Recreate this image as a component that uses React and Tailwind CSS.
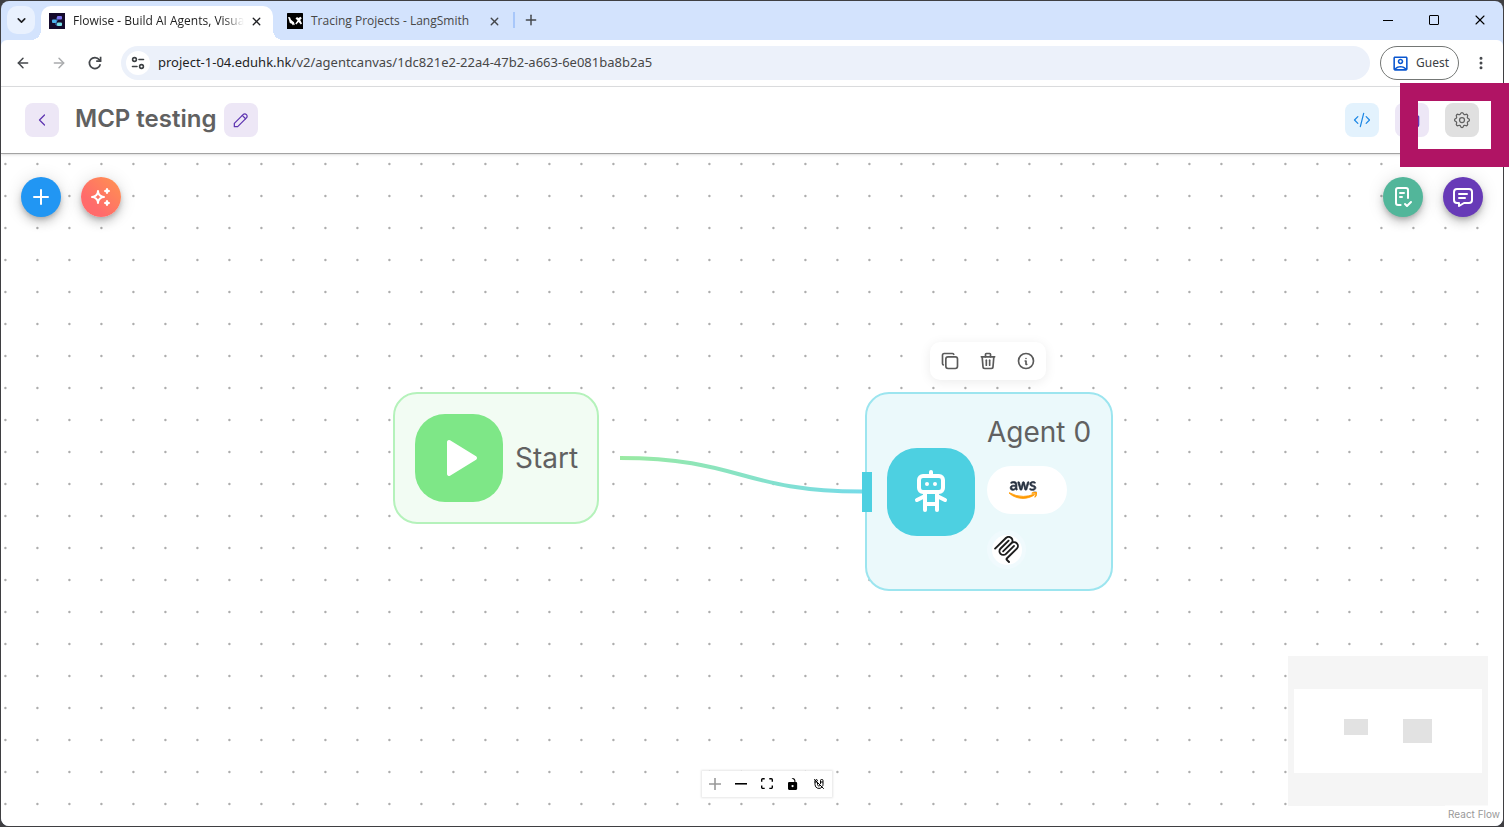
import React from 'react';
import {
  TbChevronLeft, TbPencil, TbCode, TbDeviceFloppy, TbSettings, TbCopy, TbTrash, TbInfoCircle,
  TbPlus, TbRobot, TbPlayerPlayFilled, TbMessage, TbMagnetOff,
} from 'react-icons/tb';
import { FaAws } from 'react-icons/fa6';
import { MdOutlineAccountBox } from 'react-icons/md';
import { ArrowLeft, ArrowRight, ChevronDown, X, Plus, MoreVertical } from 'lucide-react';

function FlowiseIcon() {
  return (
    <svg viewBox="0 0 16 16" className="size-4 shrink-0" aria-hidden="true">
      <rect width="16" height="16" fill="#140a2c" />
      <path d="M5 8h3V4.500h2M7 8v4h2" fill="none" stroke="#3c7fd0" strokeWidth="1" />
      <rect x="3" y="6.500" width="4.500" height="3.500" rx="1" fill="#4db4ee" />
      <rect x="8" y="3" width="5" height="3.500" rx="1" fill="#7b74ee" />
      <rect x="8" y="9.500" width="5" height="3.500" rx="1" fill="#7be0e6" />
    </svg>
  );
}

function LangSmithIcon() {
  return (
    <svg viewBox="0 0 16 16" className="size-4 shrink-0" aria-hidden="true">
      <rect width="16" height="16" rx="0.500" fill="#000" />
      <path d="M1 4l2 .3 1 2.500 3 2.500.8 3-1.300-.7-.5 1-1.200-1.800-2-.8-.8-3z" fill="#fff" />
      <path d="M8.500 5.500l1.500-1.500 1.300 1 2.200-1.300 1.300 1.600-1.600 1.700 1.800 3.600-1.200 1-2.200-2.600-2.300 2.500-1-1 2.300-3z" fill="#fff" />
    </svg>
  );
}

function SiteControlsIcon() {
  return (
    <svg viewBox="0 0 16 16" className="size-4" fill="none" stroke="#3c4043" strokeWidth="1.600" strokeLinecap="round" aria-hidden="true">
      <circle cx="4.500" cy="4.500" r="1.900" />
      <path d="M9 4.500h4.500M2.500 11.500H7" />
      <circle cx="11.500" cy="11.500" r="1.900" />
    </svg>
  );
}

function ReloadIcon() {
  return (
    <svg viewBox="0 0 16 16" className="size-4" fill="none" stroke="#44474b" strokeWidth="1.700" aria-hidden="true">
      <path d="M13.300 9.200A5.500 5.500 0 1 1 12.300 4.700L13.700 6.100" />
      <path d="M13.600 1.800V6.200H9.200" />
    </svg>
  );
}

function SparkleIcon() {
  return (
    <svg viewBox="0 0 24 24" className="size-6" fill="none" stroke="#fff" strokeWidth="2" strokeLinejoin="round" aria-hidden="true">
      <path d="M16 18a2 2 0 0 1 2 2a2 2 0 0 1 2 -2a2 2 0 0 1 -2 -2a2 2 0 0 1 -2 2zM16 6a2 2 0 0 1 2 2a2 2 0 0 1 2 -2a2 2 0 0 1 -2 -2a2 2 0 0 1 -2 2zM9 18a6 6 0 0 1 6 -6a6 6 0 0 1 -6 -6a6 6 0 0 1 -6 6a6 6 0 0 1 6 6z" />
    </svg>
  );
}

function ChecklistIcon() {
  return (
    <svg viewBox="0 0 24 24" className="size-6" fill="none" stroke="#fff" strokeWidth="2" strokeLinecap="round" strokeLinejoin="round" aria-hidden="true">
      <path d="M9.615 20H7a2 2 0 0 1-2-2V5a2 2 0 0 1 2-2h8a2 2 0 0 1 2 2v8" />
      <path d="M14 19l2 2 4-4M9 8h4M9 12h2" />
    </svg>
  );
}

function McpIcon() {
  return (
    <svg viewBox="0 0 24 24" className="size-[27px] shrink-0" fill="#1d1d1d" fillRule="evenodd" aria-hidden="true">
      <path d="M15.688 2.343a2.588 2.588 0 00-3.610 0l-9.626 9.440a.863.863 0 01-1.203 0 .823.823 0 010-1.180l9.626-9.440a4.313 4.313 0 016.016 0 4.116 4.116 0 011.204 3.540 4.300 4.300 0 013.609 1.180l.05.05a4.115 4.115 0 010 5.900l-8.706 8.537a.274.274 0 000 .393l1.788 1.754a.823.823 0 010 1.180.863.863 0 01-1.203 0l-1.788-1.753a1.920 1.920 0 010-2.754l8.706-8.538a2.470 2.470 0 000-3.540l-.05-.049a2.588 2.588 0 00-3.607-.003l-7.172 7.034-.002.002-.098.097a.863.863 0 01-1.204 0 .823.823 0 010-1.180l7.273-7.133a2.470 2.470 0 00-.003-3.537z" />
      <path d="M14.485 4.703a.823.823 0 000-1.180.863.863 0 00-1.204 0l-7.119 6.982a4.115 4.115 0 000 5.900 4.314 4.314 0 006.016 0l7.120-6.982a.823.823 0 000-1.180.863.863 0 00-1.204 0l-7.119 6.982a2.588 2.588 0 01-3.610 0 2.470 2.470 0 010-3.540l7.120-6.982z" />
    </svg>
  );
}

function AwsIcon() {
  return (
    <>
      <svg className="absolute size-0" aria-hidden="true">
        <linearGradient id="awsFill" x1="0" y1="0" x2="0" y2="1">
          <stop offset="0.600" stopColor="#252f3e" />
          <stop offset="0.600" stopColor="#ff9900" />
        </linearGradient>
      </svg>
      <FaAws className="size-7" fill="url(#awsFill)" stroke="url(#awsFill)" strokeWidth="18" aria-label="AWS" />
    </>
  );
}

function TabBar() {
  return (
    <div className="flex h-[39px] items-start pl-1.5">
      <button aria-label="Search tabs" className="mt-[5px] flex size-7 items-center justify-center rounded-[10px] bg-[#e9f1fe]">
        <ChevronDown size={13} strokeWidth={3} color="#202124" />
      </button>
      <div className="relative ml-1.5 mt-[5px] flex h-[34px] w-[232px] items-center rounded-t-[10px] bg-white pb-1 pl-2 pr-2.5 before:absolute before:-left-2.5 before:bottom-0 before:size-2.5 before:bg-[radial-gradient(circle_at_0_0,transparent_10px,#fff_10px)] after:absolute after:-right-2.5 after:bottom-0 after:size-2.5 after:bg-[radial-gradient(circle_at_100%_0,transparent_10px,#fff_10px)]">
        <FlowiseIcon />
        <span className="ml-2 whitespace-nowrap font-['Open_Sans',sans-serif] text-xs text-[#1f1f1f] [mask-image:linear-gradient(to_right,#000_88%,transparent)]">
          Flowise - Build AI Agents, Visua
        </span>
        <button aria-label="Close tab" className="ml-auto shrink-0"><X size={13} strokeWidth={2.5} color="#202124" /></button>
      </div>
      <div className="mt-[5px] flex h-[30px] w-[228px] items-center pl-3.5">
        <LangSmithIcon />
        <span className="ml-2 whitespace-nowrap font-['Open_Sans',sans-serif] text-xs text-[#474747]">Tracing Projects - LangSmith</span>
        <button aria-label="Close tab" className="ml-auto"><X size={13} strokeWidth={2.5} color="#44474b" /></button>
      </div>
      <div className="ml-3 mt-[11px] h-4 w-0.5 bg-[#a8c7fa]" />
      <button aria-label="New tab" className="ml-2 mt-[11px]"><Plus size={16} strokeWidth={2.2} color="#44474b" /></button>
      <div className="ml-auto mt-[11px] flex items-center gap-8 pr-4">
        <button aria-label="Minimize" className="flex h-4 w-3.5 items-center justify-center"><span className="h-px w-2.5 bg-black" /></button>
        <button aria-label="Maximize" className="flex h-4 w-3.5 items-center justify-center"><span className="size-2.5 rounded-[1px] border border-black" /></button>
        <button aria-label="Close" className="flex h-4 w-3.5 items-center justify-center"><X size={16} strokeWidth={1.6} color="#000" className="shrink-0" /></button>
      </div>
    </div>
  );
}

function AddressBar() {
  return (
    <div className="flex h-[47px] items-center rounded-t-md border-b border-[#dedfe1] bg-white px-3.5">
      <button aria-label="Back"><ArrowLeft size={16} strokeWidth={2.2} color="#44474b" /></button>
      <button aria-label="Forward" className="ml-5"><ArrowRight size={16} strokeWidth={2.2} color="#a9abad" /></button>
      <button aria-label="Reload" className="ml-5"><ReloadIcon /></button>
      <div className="ml-[18px] flex h-[34px] flex-1 items-center rounded-full bg-[#ecf1fa] pl-[5px]">
        <button aria-label="Site information" className="flex size-6 items-center justify-center rounded-full bg-white"><SiteControlsIcon /></button>
        <a href="#url" className="ml-2 whitespace-nowrap text-[13px] text-[#474747]">
          <span className="text-[#1f1f1f]">project-1-04.eduhk.hk</span>/v2/agentcanvas/1dc821e2-22a4-47b2-a663-6e081ba8b2a5
        </a>
      </div>
      <button className="ml-2.5 flex h-[34px] w-[79px] items-center gap-1.5 rounded-full border border-[#747775] pl-2.5 text-xs text-[#3c4043]">
        <MdOutlineAccountBox size={19} color="#0b57d0" />
        Guest
      </button>
      <button aria-label="Menu" className="ml-3.5"><MoreVertical size={16} strokeWidth={2.5} color="#44474b" /></button>
    </div>
  );
}

function AppHeader() {
  return (
    <header className="relative z-10 flex h-[67px] items-center border-b border-[#a3a3a3] bg-white px-6 shadow-sm">
      <button aria-label="Back to flows" className="flex size-[34px] items-center justify-center rounded-lg bg-[#ede7f6] text-[#5e35b1]"><TbChevronLeft size={20} strokeWidth={1.5} /></button>
      <h1 className="ml-4 pb-0.5 font-[Inter,sans-serif] text-2xl font-semibold text-[#616161]">MCP testing</h1>
      <button aria-label="Edit name" className="ml-2 flex size-[34px] items-center justify-center rounded-lg bg-[#ede7f6] text-[#5e35b1]"><TbPencil size={20} strokeWidth={1.5} /></button>
      <div className="ml-auto flex gap-4">
        <button aria-label="API endpoint" className="flex size-[34px] items-center justify-center rounded-lg bg-[#e3f2fd] text-[#1e88e5]"><TbCode size={20} strokeWidth={1.5} /></button>
        <button aria-label="Save" className="flex size-[34px] items-center justify-center rounded-lg bg-[#ede7f6] text-[#5e35b1]"><TbDeviceFloppy size={20} strokeWidth={1.5} /></button>
        <button aria-label="Settings" className="flex size-[34px] items-center justify-center rounded-lg bg-[#e0e0e0] text-[#616161]"><TbSettings size={20} strokeWidth={1.5} /></button>
      </div>
    </header>
  );
}

function CanvasDrawing() {
  return (
    <svg className="absolute inset-0 size-full" aria-hidden="true">
      <defs>
        <pattern id="dots" x="-12" y="-6" width="32" height="32" patternUnits="userSpaceOnUse">
          <circle cx="16.400" cy="16" r="1.200" fill="#adadad" />
        </pattern>
        <linearGradient id="edge" gradientUnits="userSpaceOnUse" x1="619" y1="0" x2="861" y2="0">
          <stop offset="0" stopColor="#9aeaa2" />
          <stop offset="1" stopColor="#76dbe8" />
        </linearGradient>
      </defs>
      <rect width="100%" height="100%" fill="url(#dots)" />
      <path d="M619 304C740 304 740 337.500 861 337.500" fill="none" stroke="url(#edge)" strokeWidth="4" />
    </svg>
  );
}

const fab = 'flex size-10 items-center justify-center rounded-full text-white shadow-[0_3px_5px_-1px_rgba(0,0,0,0.2),0_6px_10px_rgba(0,0,0,0.14),0_1px_18px_rgba(0,0,0,0.12)]';

function CanvasActions() {
  return (
    <div className="absolute inset-x-5 top-[23px] flex gap-5">
      <button aria-label="Add node" className={`${fab} bg-[#2196f3]`}><TbPlus size={24} /></button>
      <button aria-label="Generate" className={`${fab} bg-[linear-gradient(45deg,#ff6b6b_30%,#ff8e53_90%)]`}><SparkleIcon /></button>
      <button aria-label="Validation checklist" className={`${fab} ml-auto bg-[#52b69a]`}><ChecklistIcon /></button>
      <button aria-label="Chat" className={`${fab} bg-[#673ab7]`}><TbMessage size={24} /></button>
    </div>
  );
}

function StartNode() {
  return (
    <div className="absolute left-[392px] top-[238px] flex items-center gap-3 rounded-3xl border-2 border-[#b5f2bb] bg-[#f2fcf3] p-5 pr-[19px]">
      <div className="flex size-[88px] items-center justify-center rounded-[30px] bg-[#7ee787] text-white"><TbPlayerPlayFilled size={48} /></div>
      <span className="font-[Inter,sans-serif] text-[28px] leading-10 text-[#616161]">Start</span>
    </div>
  );
}

function NodeToolbar() {
  return (
    <div className="absolute left-[929px] top-[188px] flex gap-[18px] rounded-[10px] bg-white px-2.5 py-[9px] text-[#5a5a5a] shadow-[0_2px_12px_rgba(0,0,0,0.08)]">
      <button aria-label="Duplicate"><TbCopy size={20} /></button>
      <button aria-label="Delete"><TbTrash size={20} /></button>
      <button aria-label="Info"><TbInfoCircle size={20} /></button>
    </div>
  );
}

function AgentNode() {
  return (
    <div className="absolute left-[864px] top-[238px] flex items-center gap-3 rounded-3xl border-2 border-[#9ce5ef] bg-[#ebf9fb] p-5">
      <div className="absolute -left-[5px] top-1/2 h-10 w-2.5 -translate-y-1/2 bg-[#4dd0e1]" />
      <div className="flex size-[88px] items-center justify-center rounded-[30px] bg-[#4dd0e1] text-white"><TbRobot size={48} /></div>
      <div className="flex flex-col items-start">
        <span className="whitespace-nowrap font-[Inter,sans-serif] text-[28px] leading-9 text-[#616161]">Agent 0</span>
        <div className="mt-4 flex h-12 w-20 items-center rounded-full bg-white pl-[22px]"><AwsIcon /></div>
        <div className="mt-4 flex size-[39px] items-center justify-center rounded-full bg-[#f0fafd]">
          <div className="flex size-[30px] items-center justify-center rounded-full bg-white"><McpIcon /></div>
        </div>
      </div>
    </div>
  );
}

function CanvasControls() {
  const button = 'flex size-[26px] items-center justify-center';
  return (
    <div className="absolute bottom-[29px] left-1/2 ml-[15px] flex -translate-x-1/2 bg-white shadow-[0_0_2px_1px_rgba(0,0,0,0.1)]">
      <button aria-label="Zoom in" className={button}>
        <svg viewBox="0 0 32 32" className="w-3" fill="#999"><path d="M32 18.133H18.133V32h-4.266V18.133H0v-4.266h13.867V0h4.266v13.867H32z" /></svg>
      </button>
      <button aria-label="Zoom out" className={button}>
        <svg viewBox="0 0 32 5" className="w-3"><path d="M0 0h32v4.200H0z" /></svg>
      </button>
      <button aria-label="Fit view" className={button}>
        <svg viewBox="0 0 32 30" className="w-3"><path d="M3.692 4.630c0-.53.4-.938.939-.938h5.215V0H4.708C2.130 0 0 2.054 0 4.630v5.216h3.692V4.631zM27.354 0h-5.200v3.692h5.170c.53 0 .984.4.984.939v5.215H32V4.631A4.624 4.624 0 0027.354 0zm.954 24.830c0 .532-.4.94-.939.94h-5.215v3.768h5.215c2.577 0 4.631-2.130 4.631-4.707v-5.139h-3.692v5.139zm-23.677.94c-.531 0-.939-.4-.939-.94v-5.138H0v5.139c0 2.577 2.130 4.707 4.708 4.707h5.138V25.770H4.631z" /></svg>
      </button>
      <button aria-label="Lock" className={button}>
        <svg viewBox="0 0 25 32" className="h-3"><path d="M21.333 10.667H19.810V7.619C19.810 3.429 16.380 0 12.190 0c-4.114 1.828-1.370 2.133.305 2.438 1.676.305 4.420 2.590 4.420 5.181v3.048H3.047A3.056 3.056 0 000 13.714v15.238A3.056 3.056 0 003.048 32h18.285a3.056 3.056 0 003.048-3.048V13.714a3.056 3.056 0 00-3.048-3.047zM12.190 24.533a3.056 3.056 0 01-3.047-3.047 3.056 3.056 0 013.047-3.048 3.056 3.056 0 013.048 3.048 3.056 3.056 0 01-3.048 3.047z" /></svg>
      </button>
      <button aria-label="Toggle snapping" className={button}><TbMagnetOff size={12} /></button>
    </div>
  );
}

function MiniMap() {
  return (
    <svg className="absolute bottom-5 right-[15px] h-[150px] w-[200px] bg-[#f5f5f5]" aria-label="Mini map">
      <rect x="6" y="33" width="188" height="84" fill="#fff" />
      <rect x="56" y="63" width="24" height="16" fill="#e2e2e2" />
      <rect x="115" y="63" width="29" height="24" fill="#e2e2e2" />
    </svg>
  );
}

export default function App() {
  return (
    <div className="relative h-screen overflow-hidden bg-white font-['Noto_Sans',sans-serif]">
      <div className="mr-1.5 h-full bg-[#3f3f42] p-px">
        <div className="flex h-full flex-col overflow-hidden rounded-lg bg-[#d3e3fd]">
          <TabBar />
          <AddressBar />
          <AppHeader />
          <main className="relative flex-1 bg-white">
            <CanvasDrawing />
            <CanvasActions />
            <StartNode />
            <AgentNode />
            <NodeToolbar />
            <CanvasControls />
            <MiniMap />
            <a href="#react-flow" className="absolute bottom-[3px] right-0 bg-white/50 px-[3px] py-0.5 font-[Inter,sans-serif] text-[10px] leading-[14px] text-[#999]">React Flow</a>
          </main>
        </div>
      </div>
      <div className="absolute right-px top-[83px] z-20 h-[84px] w-[109px] border-[18px] border-[#b01464]" />
    </div>
  );
}
